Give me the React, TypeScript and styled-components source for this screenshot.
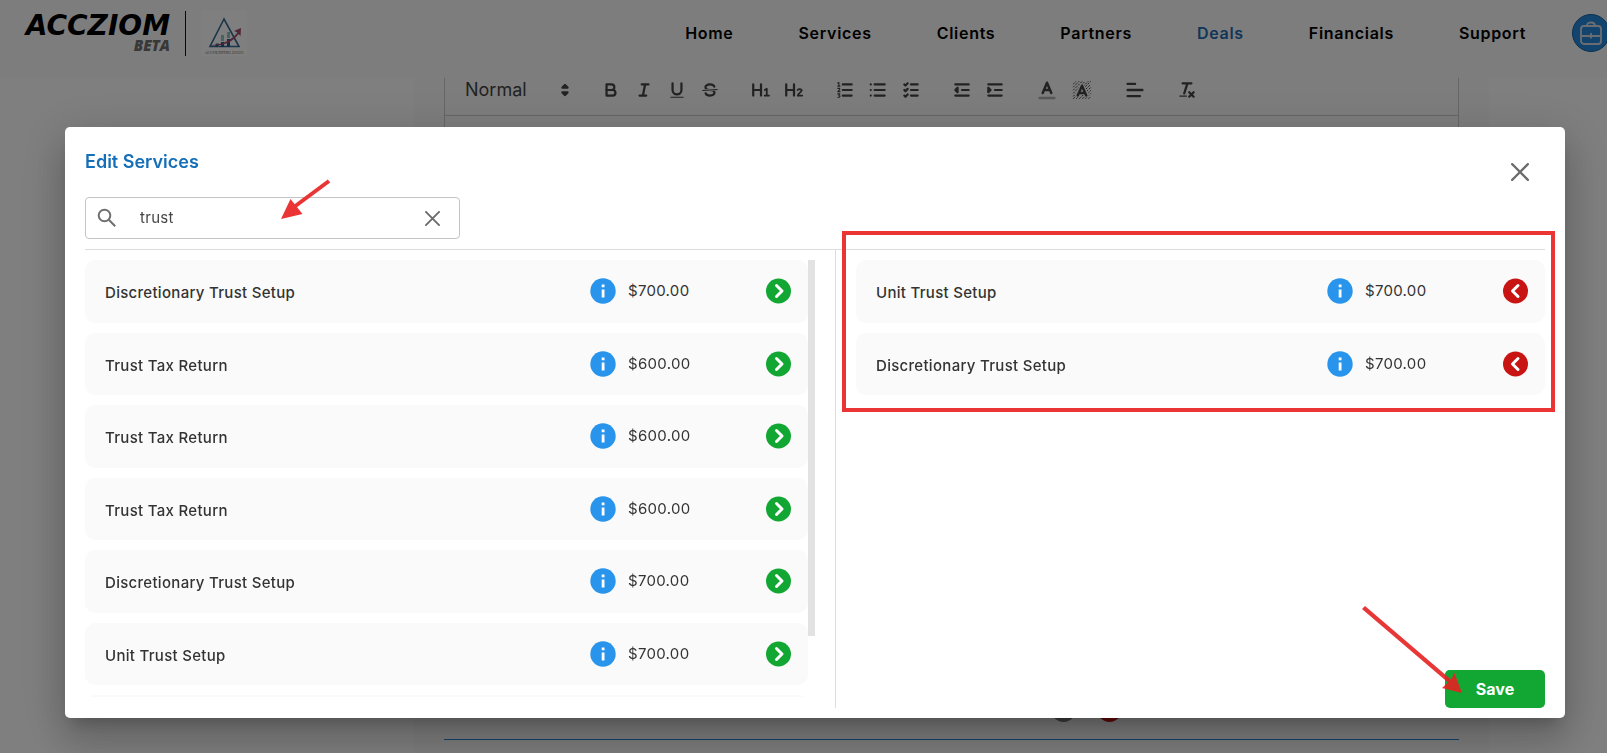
import React from 'react';
import styled, { createGlobalStyle } from 'styled-components';

const GlobalStyle = createGlobalStyle`
  * { box-sizing: border-box; }
  html, body { margin: 0; height: 100%; overflow: hidden; }
  body { font-family: Inter, "Liberation Sans", sans-serif; color: #333; background: #fff; }
  button { font-family: inherit; border: 0; padding: 0; background: none; cursor: pointer; }
  ul { list-style: none; margin: 0; padding: 0; }
`;

/* ---------- page behind the dialog ---------- */

const Page = styled.div`
  height: 100vh;
  display: flex;
  flex-direction: column;
  overflow: hidden;
`;

const Header = styled.header`
  flex: none;
  height: 78px;
  padding: 0 0 12px 19px;
  display: flex;
  align-items: center;
  background: #fbfbfb;
  overflow: hidden;
`;

const Brand = styled.a`
  display: flex;
  flex-direction: column;
  align-items: flex-end;
  width: 151px;
  color: #000;
  text-decoration: none;
`;

const BrandName = styled.span`
  font: italic 700 28px/24px "DejaVu Sans", sans-serif;
`;

const BrandTag = styled.span`
  font: italic 800 15px/14px "Open Sans", sans-serif;
  color: #707070;
`;

const BrandRule = styled.span`
  width: 1px;
  height: 45px;
  margin: 0 15px;
  background: #111;
`;

const Nav = styled.nav`
  margin-left: auto;
  display: flex;
  gap: 65px;
`;

const NavLink = styled.a<{ $active?: boolean }>`
  font-size: 16px;
  font-weight: 600;
  letter-spacing: 0.7px;
  line-height: 24px;
  text-decoration: none;
  color: ${(p) => (p.$active ? '#1f6bb0' : '#000')};
`;

const Workspace = styled.button`
  flex: none;
  width: 38px;
  height: 38px;
  margin: 0 -3px 0 46px;
  display: grid;
  place-items: center;
  border: 1px solid #1262a5;
  border-radius: 50%;
  background: #2489dc;
`;

const Main = styled.main`
  flex: 1;
  min-height: 0;
  display: grid;
  grid-template-columns: 414px minmax(0, 1fr) 118px;
`;

const Content = styled.section`
  grid-column: 2;
  padding: 0 30px 13px;
  display: flex;
  flex-direction: column;
  background: #fafafa;
`;

const Editor = styled.div`
  flex: 1;
  border: 1px solid #ccc;
  border-top: 0;
`;

const Toolbar = styled.div`
  height: 38px;
  padding: 0 0 13px 20px;
  display: flex;
  align-items: center;
  border-bottom: 1px solid #ccc;
`;

const FormatPicker = styled.label`
  display: flex;
  align-items: center;
  width: 129px;
  color: #444;
`;

const FormatSelect = styled.select`
  appearance: none;
  width: 89px;
  border: 0;
  padding: 0;
  background: none;
  font: 400 18px/24px Inter, sans-serif;
  color: inherit;
`;

const ToolGroup = styled.div`
  display: flex;
  margin-right: 18px;
`;

const ToolButton = styled.button<{ $wide?: boolean }>`
  width: ${(p) => (p.$wide ? 35 : 33)}px;
  height: 24px;
  display: grid;
  place-items: center;
`;

const RowActions = styled.div`
  display: flex;
  justify-content: center;
  gap: 21px;
  padding: 0 0 17px 270px;
  border-bottom: 1px solid #1f86dc;
`;

const RowDot = styled.button<{ $color: string }>`
  width: 25px;
  height: 25px;
  border-radius: 50%;
  background: ${(p) => p.$color};
`;

/* ---------- dialog ---------- */

const Backdrop = styled.div`
  position: fixed;
  inset: 0;
  display: flex;
  padding: 127px 42px 35px 65px;
  background: rgba(0, 0, 0, 0.5);
`;

const Dialog = styled.section`
  position: relative;
  flex: 1;
  min-width: 0;
  display: flex;
  flex-direction: column;
  padding: 20px 20px 10px;
  border-radius: 5px;
  background: #fff;
  box-shadow: 0 11px 15px -7px rgba(0, 0, 0, 0.2), 0 24px 38px 3px rgba(0, 0, 0, 0.14),
    0 9px 46px 8px rgba(0, 0, 0, 0.12);
`;

const DialogHead = styled.div`
  display: flex;
  justify-content: space-between;
  height: 50px;
`;

const Title = styled.h2`
  margin: 0;
  font-size: 18px;
  line-height: 30px;
  font-weight: 600;
  color: #146fb8;
`;

const CloseButton = styled.button`
  width: 50px;
  height: 50px;
  display: grid;
  place-items: center;
`;

const SearchBox = styled.label`
  display: flex;
  align-items: center;
  width: 375px;
  height: 42px;
  padding: 0 10px 0 9px;
  border: 1px solid #c4c4c4;
  border-radius: 4px;
`;

const SearchInput = styled.input`
  flex: 1;
  min-width: 0;
  margin-left: 21px;
  border: 0;
  padding: 0;
  outline: 0;
  background: none;
  font: 400 15px/24px Inter, sans-serif;
  letter-spacing: 0.3px;
  color: #444;
`;

const ClearButton = styled.button`
  width: 34px;
  height: 34px;
  display: grid;
  place-items: center;
`;

const Columns = styled.div`
  position: relative;
  flex: 1;
  min-height: 0;
  margin-top: 10px;
  display: grid;
  grid-template-columns: minmax(0, 1fr) minmax(0, 1fr);
  border-top: 1px solid #ddd;
`;

const Available = styled.div`
  display: flex;
  min-height: 0;
  padding: 10px 0 11px;
`;

const Chosen = styled.div`
  display: flex;
  flex-direction: column;
  margin-left: 20px;
  padding: 10px 0 0 20px;
  border-left: 1px solid #ddd;
`;

const ServiceList = styled.ul`
  flex: 1;
  overflow-y: auto;
  scrollbar-width: none;
`;

const ScrollTrack = styled.div`
  width: 7px;
`;

const ScrollThumb = styled.div`
  height: 86%;
  background: #e2e2e2;
`;

const ServiceCard = styled.li`
  display: flex;
  align-items: center;
  margin-bottom: 10px;
  padding: 20px 17px 20px 20px;
  border-radius: 10px;
  background: #fafafa;
  font-size: 15px;
  line-height: 1.5;
`;

/* empty card shown while the next page of services loads */
const LoadingCard = styled.li`
  height: 62px;
  border-radius: 10px;
  background: #fafafa;
`;

const ServiceName = styled.span`
  flex: 1;
  padding-top: 2px;
  margin-bottom: -2px;
  font-weight: 500;
  letter-spacing: 0.3px;
`;

const Price = styled.span`
  width: 138px;
  padding-left: 1px;
  letter-spacing: 0.3px;
`;

const IconButton = styled.button`
  width: 26px;
  height: 26px;
  margin: -2px 0;
`;

const InfoButton = styled(IconButton)`
  margin-right: 11px;
`;

const Footer = styled.div`
  margin-top: auto;
  display: flex;
  justify-content: flex-end;
`;

const SaveButton = styled.button`
  width: 100px;
  height: 38px;
  border-radius: 5px;
  background: #12a733;
  color: #fff;
  font-size: 16px;
  font-weight: 700;
`;

/* ---------- callouts drawn over the dialog ---------- */

const HighlightFrame = styled.div`
  position: absolute;
  top: -19px;
  right: -10px;
  left: calc(50% + 27px);
  height: 181px;
  border: 4px solid #eb3535;
  pointer-events: none;
`;

const SearchArrow = styled.svg`
  position: absolute;
  top: 50px;
  left: 212px;
  pointer-events: none;
`;

const SaveArrow = styled.svg`
  position: absolute;
  right: 99px;
  bottom: 22px;
  pointer-events: none;
`;

/* ---------- icons ---------- */

const ToolSvg = ({ size = 20, children }: { size?: number; children: React.ReactNode }) => (
  <svg width={size} height={size} viewBox="0 0 18 18" fill="none" stroke="#444" strokeWidth="2"
    strokeLinecap="round" strokeLinejoin="round">
    {children}
  </svg>
);

const H = <path d="M2 4V14M9 4V14M2 9H9" />;
const lines = (x: number) => <path d={`M${x} 4H15M${x} 9H15M${x} 14H15`} />;

const tools: { name: string; size?: number; art: React.ReactNode }[][] = [
  [
    { name: 'Bold', art: <><path d="M5 4H9.5A2.5 2.5 0 0 1 9.5 9H5Z" /><path d="M5 9H10.5A2.5 2.5 0 0 1 10.5 14H5Z" /></> },
    { name: 'Italic', art: <path d="M7 4H13M5 14H11M8 14L10 4" /> },
    { name: 'Underline', art: <><path d="M5 3V9A4 4 0 0 0 13 9V3" /><rect x="3" y="15" width="12" height="1" rx=".5" fill="#444" stroke="none" /></> },
    {
      name: 'Strike',
      art: (
        <>
          <path strokeWidth="1" d="M15.5 8.5L2.5 9.5" />
          <g fill="#444" stroke="none">
            <path d="M9.007,8C6.542,7.791,6,7.519,6,6.5,6,5.792,7.283,5,9,5c1.571,0,2.765.679,2.969,1.309a1,1,0,0,0,1.9-.617C13.356,4.106,11.354,3,9,3,6.2,3,4,4.538,4,6.5a3.2,3.2,0,0,0,.5,1.843Z" />
            <path d="M8.984,10C11.457,10.208,12,10.479,12,11.5c0,.708-1.283,1.5-3,1.5-1.571,0-2.765-.679-2.969-1.309a1,1,0,1,0-1.9.617C4.644,13.894,6.646,15,9,15c2.8,0,5-1.538,5-3.5a3.2,3.2,0,0,0-.5-1.843Z" />
          </g>
        </>
      ),
    },
  ],
  [
    { name: 'Heading 1', art: <>{H}<path strokeWidth="1.6" d="M12.4 9L14.2 7.8V14M12.3 14H16.2" /></> },
    { name: 'Heading 2', art: <>{H}<path strokeWidth="1.6" d="M12.3 9A2 1.6 0 0 1 16 9.3C16 10.8 12.8 12 12.4 14H16.4" /></> },
  ],
  [
    { name: 'Ordered list', art: <>{lines(7)}<path strokeWidth="1" d="M2.5 2.8L3.5 2.3V5.5M2.5 5.5H4.5M2.5 7.5H4.2V8.6L2.5 10.5H4.5M2.5 12.5H4.3L3.5 13.8L4.5 14.6L4 15.5H2.5" /></> },
    { name: 'Bullet list', art: <>{lines(6)}<path d="M2.500 4H2.500M2.500 9H2.500M2.500 14H2.500" /></> },
    { name: 'Check list', art: <>{lines(9)}<path d="M3 4L4 5L6 3M3 9L4 10L6 8M3 14L4 15L6 13" /></> },
  ],
  [
    { name: 'Outdent', art: <><path d="M3 4H15M9 9H15M3 14H15" /><path fill="#444" d="M5 7V11L3 9Z" /></> },
    { name: 'Indent', art: <><path d="M3 4H15M9 9H15M3 14H15" /><path fill="#444" d="M3 7V11L5 9Z" /></> },
  ],
  [
    { name: 'Text colour', size: 22, art: <><path strokeOpacity=".4" d="M3 15.500H15" /><path d="M5.5 11.5L9 3L12.5 11.5M6.6 9H11.4" /></> },
    {
      name: 'Background colour', size: 22,
      art: (
        <>
          <path strokeWidth=".8" strokeDasharray="1.2 1.6" d="M2 4L4 2M2 6.500L6.500 2M2 9L9 2M2 11.500L11.500 2M2 14L14 2M2 16L16 2M4.500 16L16 4.500M7 16L16 7M9.500 16L16 9.500M12 16L16 12M14.500 16L16 14.500" />
          <path stroke="#fafafa" strokeWidth="4" d="M5.500 13L9 6L12.500 13" />
          <path d="M5.5 13.5L9 5.5L12.5 13.5M6.6 11.5H11.4" />
        </>
      ),
    },
  ],
  [{ name: 'Align', size: 22, art: <path d="M3 4H9M3 9H15M3 14H13" /> }],
  [{ name: 'Clear formatting', art: <><path d="M5 3H13M6.5 12L9.4 3M11 11L15 15M15 11L11 15" /><rect x="2" y="14" width="7" height="1" rx=".5" fill="#444" stroke="none" /></> }],
];

const InfoIcon = () => (
  <svg width="26" height="26" viewBox="0 0 26 26">
    <circle cx="13" cy="13" r="12.700" fill="#2894eb" />
    <path d="M11.700 6.500h2.800v2.700h-2.800zM11.700 11.500h2.800v8h-2.800z" fill="#fff" />
  </svg>
);

const MoveIcon = ({ back }: { back?: boolean }) => (
  <svg width="26" height="26" viewBox="0 0 26 26">
    <circle cx="13.500" cy="13" r="12.500" fill={back ? '#c91414' : '#12a733'} />
    <path d={back ? 'M16 7.500L10.500 13L16 18.500' : 'M11.500 7.500L17 13L11.500 18.500'} fill="none" stroke="#fff"
      strokeWidth="3" strokeLinecap="round" strokeLinejoin="round" />
  </svg>
);

const Cross = ({ size }: { size: number }) => (
  <svg width={size} height={size} viewBox="0 0 16 16" stroke="#6b6b6b" strokeWidth="2" strokeLinecap="round">
    <path d="M1 1L15 15M15 1L1 15" />
  </svg>
);

const CompanyLogo = () => (
  <svg width="46" height="45" viewBox="0 0 46 45" role="img" aria-label="Company logo">
    <rect width="46" height="45" fill="#fff" />
    <path d="M23 8L9 35.500H38Z" fill="none" stroke="#356a94" strokeWidth="1.6" />
    <path d="M15 32h3v4h-3zM20 24h3v6h-3zM26 21h3v6h-3z" fill="#8fc7c4" />
    <path d="M20 31h3v5h-3zM26 28h3v8h-3zM14.500 33h3v3h-3z" fill="#1f5d8f" />
    <path d="M9 34C20 34.500 31 29 36.500 21.500L33 20L40 17L39.500 25L37.500 23C31 32 20 36 9 34Z" fill="#a34a6c" />
    <text x="23" y="43" textAnchor="middle" fontFamily="Liberation Serif, serif" fontSize="4" fill="#555">ACCOUNTING LOGO</text>
  </svg>
);

/* ---------- data ---------- */

type Service = { name: string; price: string };

const navItems = ['Home', 'Services', 'Clients', 'Partners', 'Deals', 'Financials', 'Support'];

const available: Service[] = [
  { name: 'Discretionary Trust Setup', price: '$700.00' },
  { name: 'Trust Tax Return', price: '$600.00' },
  { name: 'Trust Tax Return', price: '$600.00' },
  { name: 'Trust Tax Return', price: '$600.00' },
  { name: 'Discretionary Trust Setup', price: '$700.00' },
  { name: 'Unit Trust Setup', price: '$700.00' },
];

const chosen: Service[] = [
  { name: 'Unit Trust Setup', price: '$700.00' },
  { name: 'Discretionary Trust Setup', price: '$700.00' },
];

const Services = ({ items, back, loading }: { items: Service[]; back?: boolean; loading?: boolean }) => (
  <ServiceList>
    {items.map((s, i) => (
      <ServiceCard key={i}>
        <ServiceName>{s.name}</ServiceName>
        <InfoButton aria-label={`About ${s.name}`}><InfoIcon /></InfoButton>
        <Price>{s.price}</Price>
        <IconButton aria-label={`${back ? 'Remove' : 'Add'} ${s.name}`}><MoveIcon back={back} /></IconButton>
      </ServiceCard>
    ))}
    {loading && <LoadingCard aria-hidden="true" />}
  </ServiceList>
);

export default function App() {
  return (
    <>
      <GlobalStyle />
      <Page>
        <Header>
          <Brand href="#">
            <BrandName>ACCZIOM</BrandName>
            <BrandTag>BETA</BrandTag>
          </Brand>
          <BrandRule />
          <CompanyLogo />
          <Nav>
            {navItems.map((item) => (
              <NavLink key={item} href="#" $active={item === 'Deals'}>{item}</NavLink>
            ))}
          </Nav>
          <Workspace aria-label="Workspace">
            <svg width="24" height="26" viewBox="0 0 24 26" fill="none" stroke="#d4dde6" strokeWidth="1.8">
              <rect x="2" y="6" width="20" height="18" rx="3" />
              <path d="M8 6C8 3 9.500 2.500 12 2.500S16 3 16 6M2 16H22M12 13V18.500" />
            </svg>
          </Workspace>
        </Header>
        <Main>
          <Content>
            <Editor>
              <Toolbar>
                <FormatPicker>
                  <FormatSelect aria-label="Text style"><option>Normal</option></FormatSelect>
                  <svg width="22" height="22" viewBox="0 0 18 18" fill="#444" stroke="#444" strokeWidth="2" strokeLinejoin="round">
                    <path d="M7 11L9 13L11 11ZM7 7L9 5L11 7Z" />
                  </svg>
                </FormatPicker>
                {tools.map((group, i) => (
                  <ToolGroup key={i}>
                    {group.map((t) => (
                      <ToolButton key={t.name} aria-label={t.name} $wide={!!t.size}>
                        <ToolSvg size={t.size}>{t.art}</ToolSvg>
                      </ToolButton>
                    ))}
                  </ToolGroup>
                ))}
              </Toolbar>
            </Editor>
            <RowActions>
              <RowDot aria-label="Edit" $color="#777" />
              <RowDot aria-label="Delete" $color="#c91414" />
            </RowActions>
          </Content>
        </Main>
      </Page>
      <Backdrop>
        <Dialog role="dialog" aria-modal="true" aria-labelledby="dialog-title">
          <DialogHead>
            <Title id="dialog-title">Edit Services</Title>
            <CloseButton aria-label="Close"><Cross size={18} /></CloseButton>
          </DialogHead>
          <SearchBox>
            <svg width="24" height="24" viewBox="0 0 24 24" fill="none" stroke="#6f6f6f" strokeWidth="2">
              <circle cx="9.500" cy="9.500" r="5.800" />
              <path d="M13.800 13.800L20.200 20.200" />
            </svg>
            <SearchInput aria-label="Search services" defaultValue="trust" />
            <ClearButton aria-label="Clear search"><Cross size={15} /></ClearButton>
          </SearchBox>
          <Columns>
            <Available>
              <Services items={available} loading />
              <ScrollTrack><ScrollThumb /></ScrollTrack>
            </Available>
            <Chosen>
              <Services items={chosen} back />
              <Footer><SaveButton>Save</SaveButton></Footer>
            </Chosen>
            <HighlightFrame />
          </Columns>
          <SearchArrow width="56" height="46" viewBox="0 0 56 46" fill="#eb3535">
            <path d="M52 4L17 30" stroke="#eb3535" strokeWidth="4" />
            <path d="M4 42L13.500 22L25.500 37Z" />
          </SearchArrow>
          <SaveArrow width="104" height="90" viewBox="0 0 104 90" fill="#e62222" opacity="0.9">
            <path d="M3 0L89 73.500L92.500 67L100 87L80 82L86 76.500L0 3Z" />
          </SaveArrow>
        </Dialog>
      </Backdrop>
    </>
  );
}
